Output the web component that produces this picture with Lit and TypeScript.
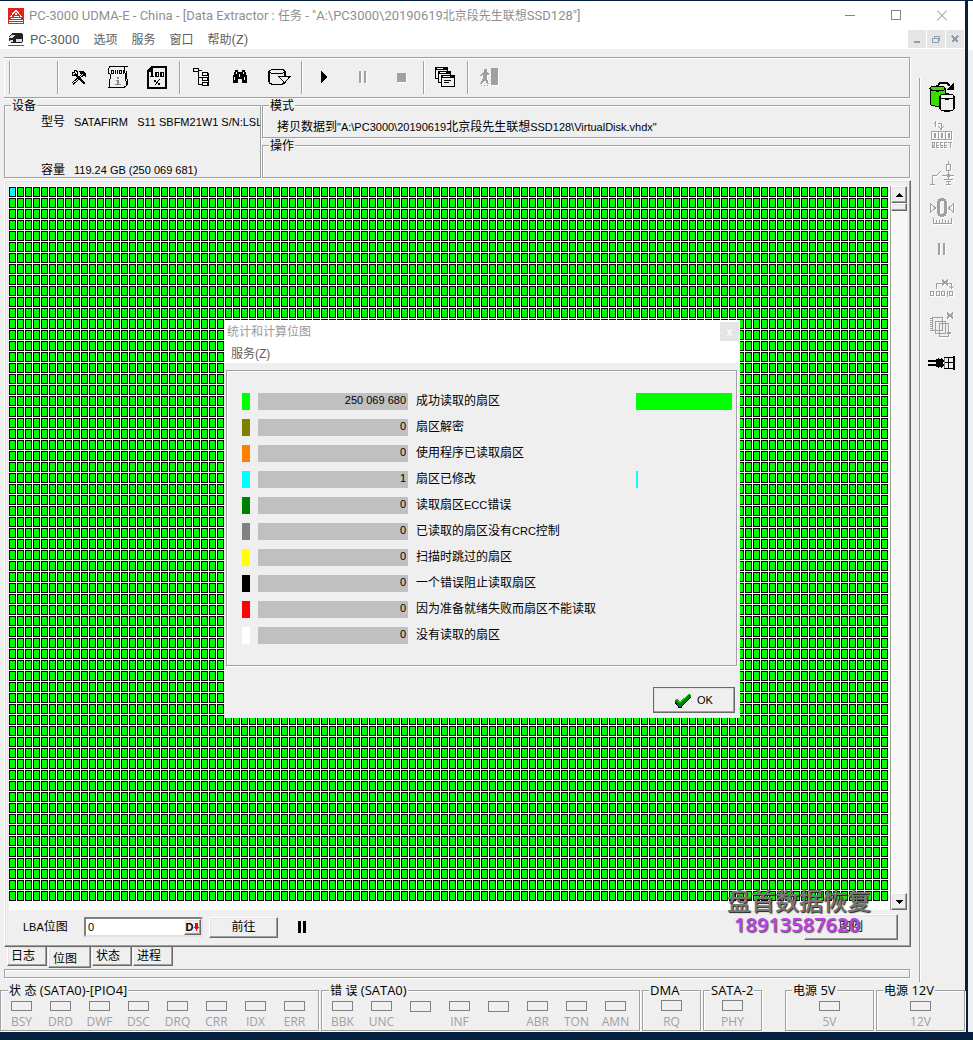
import { LitElement, html, svg, css, nothing, TemplateResult } from "lit";
import { customElement, property } from "lit/decorators.js";

/** Splits a string so that Han runs can carry their own text size. */
const mixed = (text: string) =>
  text
    .split(/([\u2e80-\u9fff]+)/)
    .filter((run) => run !== "")
    .map((run) => (/[\u2e80-\u9fff]/.test(run) ? html`<span class="han">${run}</span>` : run));

const glyphs: Record<string, [number, number, TemplateResult]> = {
  tools: [17, 17, svg`<path d="M4 5 14 15" stroke="#000" stroke-width="2"/><path d="M12.500 6 2 15.500M11 5 1 14" fill="none" stroke="#000"/><path d="M4 1.500H3v2H1v2l1 1h3l1-1v-3l-1-1z" fill="none" stroke="#000"/><path d="M8 2h4l3 3v3h-1l-2-3-2 1z" fill="#000"/>`],
  script: [23, 23, svg`<path d="M3 .500H21M3 .500 1 3v4l2 1v5l-1 8.500H17l2-1.500v-5l-1-3V7l-1-3 1-3.500M19 5v5l1 3v6" fill="none" stroke="#000"/><path d="M4.500 4.500h2v3h-2zM8.500 4v4M10.500 4v4M12.500 4.500h2v3h-2zM16.500 4v4" fill="none" stroke="#000"/><path d="M10 11h2v2h-2zM9 14h3v4h2v1H8v-1h2v-3H9z" fill="#888"/>`],
  percent: [21, 23, svg`<path d="M5 1H19v21H1V5zM5 1v4H1" fill="none" stroke="#000" stroke-width="1.500"/><path d="M4 6h2v5H4zM3 10h4v1H3zM8 6h4v5H8zM13 6h4v5h-4z" fill="#000"/><path d="M10 7v3M15 7v3" stroke="#efefef"/><path d="M7 14h2v2H7zM11 17h2v2h-2z" fill="#000"/><path d="M12.500 13.500 8 19" stroke="#000"/>`],
  tree: [17, 21, svg`<path d="M.500 1.500h5v3h-5zM6 3.500h3M5.500 5v13M5.500 10.500h4M5.500 17.500h4M9.500 5.500h5v3h-5zM9.500 10.500h5v3h-5zM9.500 15.500h5v3h-5z" fill="none" stroke="#000"/><path d="M15.500 6v13" stroke="#000"/>`],
  binoculars: [17, 15, svg`<path d="M3 0h3v2h4V0h3l2 6v7h-5V9H6v4H1V7z" fill="#000"/><path d="M4.500 2v2M11.500 2v2M2.500 7v3M12.500 7v3M7.500 4v3" stroke="#efefef"/>`],
  diskdown: [23, 19, svg`<path d="M1 3.500C1 .500 17 .500 17 3.500S1 6.500 1 3.500M1 3.500V14c0 3 16 4 16 0M17 4v5" fill="none" stroke="#000" stroke-width="1.200"/><path d="M11 8.500H22L16.500 15z" fill="#efefef" stroke="#000"/>`],
  play: [7, 13, svg`<path d="M1 0h1l5 5.500v1L2 12H1z" fill="#000"/>`],
  pause: [7, 13, svg`<path d="M0 0h2v12H0zM5 0h2v12H5z" fill="#a0a0a0"/>`],
  pauseSide: [8, 12, svg`<path d="M0 0h2v12H0zM5 0h2v12H5z" fill="#a0a0a0"/>`],
  pauseOn: [8, 12, svg`<path d="M0 0h3v12H0zM5 0h3v12H5z" fill="#000"/>`],
  stop: [9, 9, svg`<path d="M0 0h9v9H0z" fill="#a0a0a0"/>`],
  windows: [21, 21, svg`<g fill="#efefef" stroke="#000"><path d="M.500.500h12v11H.500z"/><path d="M3.500 4.500h12v11h-12z"/><path d="M6.500 8.500h13v11h-13z"/></g><path d="M0 0h13v3H0zM3 4h13v3H3zM6 8h14v3H6z" fill="#000"/><path d="M2 1.500h6M5 5.500h6M8 9.500h7" stroke="#fff"/><path d="M9 13.500h7M9 15.500h5" stroke="#000"/>`],
  exit: [19, 19, svg`<path d="M11 0h7v17h-7zM4 1h3v3H4zM3 4h4l2 2v1H7v4l2 5H7l-2-4-3 4H0l3-6V6L1 8H0V7zM1 17h1v1H1zM4 17h1v1H4zM7 17h1v1H7z" fill="#a0a0a0"/>`],
  disks: [26, 30, svg`<path d="M1 6.500v15c0 3.500 15 3.500 15 0v-15" fill="#38dc00" stroke="#000"/><ellipse cx="8.500" cy="6.500" rx="7.500" ry="2.500" fill="#38dc00" stroke="#000" stroke-width="1.200"/><path d="M11 14.500v12c0 3.500 14 3.500 14 0v-12" fill="#efefef" stroke="#000" stroke-width="1.200"/><ellipse cx="18" cy="14.500" rx="7" ry="2.500" fill="#efefef" stroke="#000" stroke-width="1.200"/><path d="M9 3 11 1h7l3 3" fill="none" stroke="#000" stroke-width="1.500"/><path d="M25 0v8h-7z" fill="#000"/>`],
  reset: [22, 28, svg`<path d="M3 2.500h1.500M4.500 0v6M7 2.500h3V8M7.500 5.500l2.500 3 2.500-3" fill="none" stroke="#a0a0a0"/><path d="M0 10.500h21M0 18.500h21M.500 10v9M7.500 10v9M14.500 10v9M20.500 10v9" stroke="#a0a0a0"/><path d="M3.500 12.500h1v4h-1zM10.500 12.500h1v4h-1zM17.500 12.500h1v4h-1z" fill="none" stroke="#a0a0a0"/><path d="M1.500 27v-5.500h2v3h-2l2 2.500M8 21.500H5.500v5H8M5.500 24.500H8M12 21.500H9.500v3h2v2H9M16 21.500h-2.500v5H16M13.500 24.500H16M17 21.500h4M19.500 21.500V27" fill="none" stroke="#a0a0a0"/>`],
  relay: [24, 24, svg`<path d="M0 23.500h5M2.500 23V14.500h4l4-4M12 14.500h12M18.500 0v3M16.500 3.500h4v6h-4zM18.500 10v8M14 18.500h9M16 20.500h5M18.500 21v3M16 23.500h5" fill="none" stroke="#a0a0a0"/><path d="M17 13h3v3h-3z" fill="#a0a0a0"/>`],
  gauge: [24, 26, svg`<path d="M.500 5.500v9l5-4.500zM23.500 5.500v9L18.500 10z" fill="none" stroke="#a0a0a0"/><rect x="8.500" y="1.500" width="7" height="16" rx="3.500" fill="none" stroke="#a0a0a0" stroke-width="3"/><path d="M3.500 20v5.500h18V20M6.500 22v3M9.500 22v3M12.500 21v4M15.500 22v3M18.500 22v3" fill="none" stroke="#a0a0a0"/>`],
  blocks: [24, 20, svg`<path d="M.500 14.500h3v4h-3zM6.500 14.500h3v4h-3zM11.500 14.500h3v4h-3zM19.500 14.500h3v4h-3zM17.500 14v6M6.500 12V6.500H21.500V11M19.500 9.500l2 2 2-2" fill="none" stroke="#a0a0a0"/><path d="M12 3l6 5M18 3l-6 5" stroke="#a0a0a0" stroke-width="2"/>`],
  copies: [24, 26, svg`<path d="M2.500 5.500h10v13h-10zM5.500 9.500h10v12h-10zM9.500 11.500h9v13h-9z" fill="#efefef" stroke="#a0a0a0"/><path d="M1 6v14" stroke="#a0a0a0" stroke-width="2" stroke-dasharray="1 1"/><path d="M17 1l6 5M23 1l-6 5" stroke="#a0a0a0" stroke-width="2"/><path d="M17 20h4v2h-4zM18 19h1v4h-1z" fill="#a0a0a0"/>`],
  probe: [28, 14, svg`<path d="M0 4h16v2H0zM0 8h16v2H0zM6 5h3v1H6zM8 3h7v4H8zM8 7h7v4H8zM10 2h1v10h-1zM13 2h1v10h-1z" fill="#000"/><path d="M16 1.500h9M16 6.500h9M16 12.500h9M20.500 1v12" stroke="#000"/><path d="M16.500 2v10" stroke="#888"/><path d="M25 0h2v14h-2z" fill="#000"/>`],
  check: [16, 15, svg`<path d="M1 9 5 14 15 3" fill="none" stroke="#000080" stroke-width="3"/><path d="M1 7 5 12 15 1.500" fill="none" stroke="#008000" stroke-width="3.500"/><path d="M1 6 5 9.500 14 1" fill="none" stroke="#00e000"/>`],
  logo: [16, 16, svg`<path d="M0 0h16v16H0z" fill="#e2231a"/><path d="M8 2 2.500 9M8 2l5.500 7M3 10.500h10M1 12.500h14M1 14.500h14M5.500 8.500h5M8 5v2" fill="none" stroke="#fff" stroke-width="1.200"/>`],
  drive: [16, 15, svg`<path d="M1 4 4 1h10l1 2v6l-2 2H3L1 9z" fill="#222"/><path d="M3 3h5L4 6H1zM8 7h6v3H8zM2 8h3v2H2z" fill="#ddd"/><path d="M0 13h16v1H0z" fill="#e2231a"/>`],
  minimize: [10, 11, svg`<path d="M0 5.500h10" stroke="#858585"/>`],
  maximize: [10, 11, svg`<path d="M.500.500h9v9h-9z" fill="none" stroke="#858585"/>`],
  close: [10, 11, svg`<path d="M0 .500l10 10M10 .500l-10 10" stroke="#858585" shape-rendering="auto"/>`],
  childMin: [8, 8, svg`<path d="M1 6h6v2H1z" fill="#92a0b0"/>`],
  childRestore: [8, 8, svg`<path d="M2 1.500h6M2.500 1v2M7.500 1v4H6M0 3.500h6v4H.500v-4" fill="none" stroke="#92a0b0"/>`],
  childClose: [8, 8, svg`<path d="M1 1l6 6M7 1 1 7" stroke="#92a0b0" stroke-width="2"/>`],
  up: [7, 4, svg`<path d="M0 4 3.500 0 7 4z" fill="#000"/>`],
  down: [7, 4, svg`<path d="M0 0h7L3.500 4z" fill="#000"/>`],
  arrow: [5, 8, svg`<path d="M1 0h3v4h1L2.500 8 0 4h1z" fill="red"/>`],
};

const icon = (name: string, dim = false) => {
  const [w, h, body] = glyphs[name];
  return html`<svg class=${dim ? "dim" : ""} width=${w} height=${h} viewBox="0 0 ${w} ${h}" aria-hidden="true">${body}</svg>`;
};

const base = css`
  * { box-sizing: border-box; }
  button, input, fieldset, legend { font: inherit; color: inherit; margin: 0; padding: 0; border: 0; min-width: 0; }
  button { background: none; display: flex; align-items: center; justify-content: center; }
  svg { display: block; flex: none; shape-rendering: crispEdges; }
  .han { font-size: 12px; }
  .dim { filter: drop-shadow(1px 1px 0 #fff); }
  .raised {
    background: #efefef;
    border: 1px solid;
    border-color: #fff #696969 #696969 #fff;
    box-shadow: inset -1px -1px #a0a0a0, inset 1px 1px #e3e3e3;
  }
  .etched {
    border: 1px solid #a0a0a0;
    box-shadow: 1px 1px #fff, inset 1px 1px #fff;
  }
`;

@customElement("led-group")
class LedGroup extends LitElement {
  @property() heading = "";
  @property({ attribute: false }) leds: string[] = [];

  static styles = [
    base,
    css`
      :host { display: block; min-width: 0; }
      .group { display: flex; height: 48px; padding: 3px 0 0; }
      .group.many { padding: 3px 4px 0 1px; }
      .title { margin-left: 6px; padding: 0 1px; font-size: 13px; line-height: 14px; background: #efefef; color: #000; }
      .led { flex: 1; display: flex; flex-direction: column; align-items: center; min-width: 0; color: #a0a0a0; line-height: 16px; gap: 3px; }
      .lamp { width: 21px; height: 11px; border: 1px solid #808080; }
    `,
  ];

  render() {
    return html`<fieldset class="group etched ${this.leds.length > 1 ? "many" : ""}">
      <legend class="title">${mixed(this.heading)}</legend>
      ${this.leds.map((name) => html`<span class="led"><span class="lamp"></span>${name}</span>`)}
    </fieldset>`;
  }
}

const stats: [string, string, string, string, number][] = [
  ["success", "#00ff00", "250 069 680", "成功读取的扇区", 96],
  ["decoded", "#808000", "0", "扇区解密", 0],
  ["utility", "#ff8000", "0", "使用程序已读取扇区", 0],
  ["modified", "#00ffff", "1", "扇区已修改", 2],
  ["ecc", "#008000", "0", "读取扇区ECC错误", 0],
  ["crc", "#808080", "0", "已读取的扇区没有CRC控制", 0],
  ["skipped", "#ffff00", "0", "扫描时跳过的扇区", 0],
  ["blocked", "#000000", "0", "一个错误阻止读取扇区", 0],
  ["ready", "#ff0000", "0", "因为准备就绪失败而扇区不能读取", 0],
  ["unread", "#ffffff", "0", "没有读取的扇区", 0],
];

@customElement("stats-dialog")
class StatsDialog extends LitElement {
  static styles = [
    base,
    css`
      :host { display: block; background: #efefef; }
      .head { background: #fff; height: 43px; display: grid; grid-template: 19px 22px / 1fr 19px; padding: 2px 1px 0 3px; color: #999; line-height: 21px; }
      .shut { width: 19px; height: 19px; background: #e5e5e5; color: #fff; line-height: 16px; }
      .menu { justify-self: start; padding: 4px 4px 0; line-height: 22px; color: #606060; }
      .panel { margin: 7px 3px 0 2px; padding: 22px 4px 21px 15px; display: grid; gap: 9px; font-size: 11px; }
      .row { display: grid; grid-template-columns: 8px 150px 1fr 96px; column-gap: 8px; height: 17px; }
      .value { background: #c0c0c0; text-align: right; padding-right: 2px; line-height: 14px; }
      .name { line-height: 17px; white-space: nowrap; }
      .bar { height: 17px; }
      .foot { display: flex; justify-content: flex-end; padding: 21px 5px 6px; }
      .ok { width: 82px; height: 26px; gap: 6px; outline: 1px solid #696969; outline-offset: -1px; font-size: 11px; }
    `,
  ];

  render() {
    return html`
      <div class="head">
        <span>统计和计算位图</span>
        <button class="shut" aria-label="关闭">x</button>
        <button class="menu">服务(Z)</button>
      </div>
      <div class="panel etched">
        ${stats.map(
          ([id, color, value, label, width]) => html`<div class="row">
            <span style="background:${color}"></span>
            <output class="value" id=${id}>${value}</output>
            <label class="name" for=${id}>${mixed(label)}</label>
            ${width ? html`<span class="bar" style="width:${width}px;background:${color}"></span>` : nothing}
          </div>`,
        )}
      </div>
      <div class="foot"><button class="ok raised">${icon("check")}OK</button></div>
    `;
  }
}

@customElement("app-root")
class AppRoot extends LitElement {
  static styles = [
    base,
    css`
      :host {
        display: grid;
        grid-template-columns: 1fr 5px;
        column-gap: 3px;
        min-height: 100vh;
        padding: 1px 0 8px;
        box-sizing: border-box;
        position: relative;
        background: #06203f;
        font: 12px/16px "Open Sans", "Noto Sans CJK SC", sans-serif;
      }
      .window { display: flex; flex-direction: column; background: #efefef; min-width: 0; }
      .behind { background: linear-gradient(#fff 49px, #efefef 49px); }
      .title { display: flex; align-items: center; height: 29px; padding-left: 8px; gap: 5px; background: #fff; color: #8f8f8f; white-space: nowrap; }
      .title, .menus { font-family: Roboto, "Noto Sans CJK SC", sans-serif; font-size: 13px; }
      .title .name { flex: 1; overflow: hidden; }
      .title .controls { display: flex; }
      .title .sys { width: 46px; height: 28px; }
      .menus { display: flex; height: 19px; padding-left: 8px; background: #fff; color: #606060; }
      .menus .drive { align-self: center; margin-right: 6px; }
      .menus .entry { margin-right: 14px; white-space: nowrap; }
      .children { margin-left: auto; display: flex; gap: 1px; padding-right: 1px; }
      .children .child { width: 18px; height: 18px; background: #e5e5e5; }
      .main { flex: 1; display: flex; gap: 8px; }
      .work { flex: 1; min-width: 0; padding: 8px 0 5px 4px; display: flex; flex-direction: column; }
      .toolbar { display: flex; height: 41px; padding: 3px 0 3px 5px; margin-right: 1px; border-left: 0; }
      .tools { display: flex; padding: 0 2px; border-left: 1px solid #a0a0a0; box-shadow: inset 1px 0 #fff; }
      .tools.blank { width: 48px; }
      .tools .tool { width: 39px; }
      .gdi { font-family: "Liberation Sans", "Noto Sans CJK SC", sans-serif; font-size: 11px; color: #000; }
      .info { display: grid; grid-template-columns: 257px 1fr; grid-template-rows: 40px 40px; column-gap: 1px; margin-right: 1px; }
      .info .device { grid-row: span 2; }
      .info .caption { margin-left: 6px; padding: 2px 1px 0; line-height: 12px; background: #efefef; }
      .device { overflow: hidden; }
      .spec { display: grid; grid-template-columns: 24px 1fr; column-gap: 9px; row-gap: 32px; margin: 2px 0 0 36px; white-space: pre; }
      .spec .field { margin: 0; overflow: hidden; }
      .spec .key { white-space: nowrap; }
      .mode { margin: 0 0 0 14px; padding-top: 7px; white-space: nowrap; }
      .book { flex: 1; display: flex; flex-direction: column; margin-top: 2px; padding: 5px 3px 2px 4px; }
      .map { flex: 1; display: flex; background: #fff; min-height: 200px; }
      .cells { flex: 1; margin: 1px 1px 9px 0; background-color: #0f0; background-size: 8px 11px;
        background-image: linear-gradient(to right, transparent 7px, #fff 7px), linear-gradient(transparent 10px, #fff 10px),
          linear-gradient(to right, #000 1px, transparent 1px, transparent 6px, #000 6px),
          linear-gradient(#000 1px, transparent 1px, transparent 9px, #000 9px); }
      .here { display: block; width: 7px; height: 10px; background: #0ff; border: 1px solid #000; }
      .scroll { width: 17px; display: flex; flex-direction: column; background: #f7f7f7; border-left: 1px solid #a0a0a0; }
      .scroll .step { height: 17px; }
      .scroll .thumb { height: 8px; }
      .scroll .down { margin-top: auto; }
      .goto { display: flex; align-items: center; height: 34px; padding: 0 9px 0 14px; }
      .goto .lba { width: 61px; }
      .box { display: flex; width: 119px; height: 20px; background: #fff; border: 2px solid; border-color: #808080 #e3e3e3 #e3e3e3 #808080; }
      .box .entry { flex: 1; width: 0; padding: 0 2px; outline: 0; background: none; }
      .box .radix { width: 17px; gap: 1px; font-weight: 700; }
      .goto .go { width: 69px; height: 21px; margin: 0 20px 0 6px; }
      .goto .legend { width: 94px; height: 26px; margin-left: auto; }
      .tabs { display: flex; padding-left: 3px; gap: 1px; height: 21px; align-items: flex-start; }
      .tabs .tab { width: 40px; height: 19px; padding-left: 3px; justify-content: flex-start; border-top: 0; }
      .tabs .tab.on { height: 21px; width: 43px; padding: 3px 0 0 4px; }
      .strip { height: 9px; margin: 1px 1px 0 0; }
      .side { width: 46px; margin: 29px 0 1px; border-left: 1px solid #a0a0a0; box-shadow: inset 1px 0 #fff; }
      .side .tool { width: 44px; height: 38px; }
      .lamps { display: grid; grid-template-columns: 319fr 319fr 59fr 59fr 19fr 89fr 89fr; column-gap: 2px; padding-bottom: 1px; color: #000; white-space: nowrap; }
      .dialog { position: absolute; left: 224px; top: 320px; width: 516px; height: 398px; font-family: "Liberation Sans", "Noto Sans CJK SC", sans-serif; color: #000; }
      .mark { position: absolute; right: 102px; bottom: 105px; text-align: center; pointer-events: none; }
      .mark .brand { margin: 0; font-size: 24px; line-height: 28px; font-weight: 500; color: #777; text-shadow: 1px 1px 1px #222; }
      .mark .phone { margin: 0 4px 0 0; font-size: 20px; line-height: 20px; font-weight: 600; color: #c03cf0; text-shadow: 1px 1px 1px #555; }
    `,
  ];

  private tool(name: string, label: string, dim = false) {
    return html`<button class="tool" aria-label=${label} ?disabled=${dim}>${icon(name, dim)}</button>`;
  }

  render() {
    return html`
      <div class="window">
        <header class="title">
          ${icon("logo")}
          <span class="name">${mixed('PC-3000 UDMA-E - China - [Data Extractor : 任务 - "A:\\PC3000\\20190619北京段先生联想SSD128"]')}</span>
          <div class="controls">
            <button class="sys" aria-label="最小化">${icon("minimize")}</button>
            <button class="sys" aria-label="最大化">${icon("maximize")}</button>
            <button class="sys" aria-label="关闭">${icon("close")}</button>
          </div>
        </header>
        <nav class="menus">
          <span class="drive">${icon("drive")}</span>
          ${["PC-3000", "选项", "服务", "窗口", "帮助(Z)"].map((m) => html`<button class="entry">${mixed(m)}</button>`)}
          <div class="children">
            <button class="child" aria-label="最小化子窗口">${icon("childMin")}</button>
            <button class="child" aria-label="还原子窗口">${icon("childRestore")}</button>
            <button class="child" aria-label="关闭子窗口">${icon("childClose")}</button>
          </div>
        </nav>
        <div class="main">
          <div class="work">
            <div class="toolbar etched">
              <div class="tools blank"></div>
              <div class="tools">${this.tool("tools", "工具")}${this.tool("script", "信息")}${this.tool("percent", "进度")}</div>
              <div class="tools">${this.tool("tree", "目录树")}${this.tool("binoculars", "查找")}${this.tool("diskdown", "保存")}</div>
              <div class="tools">${this.tool("play", "开始")}${this.tool("pause", "暂停", true)}${this.tool("stop", "停止", true)}</div>
              <div class="tools">${this.tool("windows", "窗口")}</div>
              <div class="tools">${this.tool("exit", "退出", true)}</div>
            </div>
            <div class="info gdi">
              <fieldset class="device etched">
                <legend class="caption">${mixed("设备")}</legend>
                <dl class="spec">
                  <dt class="key">${mixed("型号")}</dt><dd class="field">SATAFIRM   S11 SBFM21W1 S/N:LSL</dd>
                  <dt class="key">${mixed("容量")}</dt><dd class="field">119.24 GB (250 069 681)</dd>
                </dl>
              </fieldset>
              <fieldset class="etched">
                <legend class="caption">${mixed("模式")}</legend>
                <p class="mode">${mixed('拷贝数据到"A:\\PC3000\\20190619北京段先生联想SSD128\\VirtualDisk.vhdx"')}</p>
              </fieldset>
              <fieldset class="etched"><legend class="caption">${mixed("操作")}</legend></fieldset>
            </div>
            <div class="book raised gdi">
              <div class="map">
                <div class="cells"><span class="here"></span></div>
                <div class="scroll">
                  <button class="step raised" aria-label="向上">${icon("up")}</button>
                  <span class="thumb raised"></span>
                  <button class="step down raised" aria-label="向下">${icon("down")}</button>
                </div>
              </div>
              <div class="goto">
                <label class="lba" for="lba">${mixed("LBA位图")}</label>
                <span class="box">
                  <input class="entry" id="lba" value="0" />
                  <button class="radix raised" aria-label="十进制">D${icon("arrow")}</button>
                </span>
                <button class="go raised">${mixed("前往")}</button>
                ${icon("pauseOn")}
                <button class="legend raised">${mixed("图例")}</button>
              </div>
            </div>
            <div class="tabs gdi">
              ${["日志", "位图", "状态", "进程"].map((t, i) => html`<button class="tab raised ${i === 1 ? "on" : ""}">${mixed(t)}</button>`)}
            </div>
            <div class="strip etched"></div>
          </div>
          <aside class="side">
            ${this.tool("disks", "复制")}${this.tool("reset", "复位", true)}${this.tool("relay", "电源", true)}${this.tool("gauge", "校准", true)}
            ${this.tool("pauseSide", "暂停", true)}${this.tool("blocks", "扇区", true)}${this.tool("copies", "副本", true)}${this.tool("probe", "接口")}
          </aside>
        </div>
        <footer class="lamps">
          <led-group heading="状 态 (SATA0)-[PIO4]" .leds=${["BSY", "DRD", "DWF", "DSC", "DRQ", "CRR", "IDX", "ERR"]}></led-group>
          <led-group heading="错 误 (SATA0)" .leds=${["BBK", "UNC", "", "INF", "", "ABR", "TON", "AMN"]}></led-group>
          <led-group heading="DMA" .leds=${["RQ"]}></led-group>
          <led-group heading="SATA-2" .leds=${["PHY"]}></led-group>
          <span></span>
          <led-group heading="电源 5V" .leds=${["5V"]}></led-group>
          <led-group heading="电源 12V" .leds=${["12V"]}></led-group>
        </footer>
      </div>
      <div class="behind"></div>
      <stats-dialog class="dialog" role="dialog" aria-label="统计和计算位图"></stats-dialog>
      <div class="mark"><p class="brand">盘首数据恢复</p><p class="phone">18913587620</p></div>
    `;
  }
}
